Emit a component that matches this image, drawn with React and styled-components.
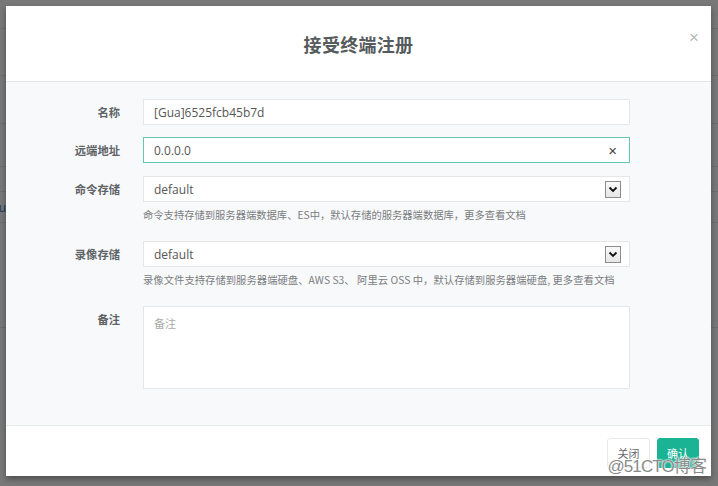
import React from 'react';
import styled, { createGlobalStyle } from 'styled-components';

const GlobalStyle = createGlobalStyle`
  html, body {
    margin: 0;
    padding: 0;
    width: 718px;
    height: 486px;
    overflow: hidden;
    font-family: "Open Sans", "Noto Sans CJK SC", sans-serif;
    color: #676a6c;
  }
`;

const Screen = styled.div`
  position: relative;
  width: 718px;
  height: 486px;
  overflow: hidden;
  background: #ffffff;
`;

const PageHeader = styled.div`
  height: 28px;
  border-bottom: 1px solid #e7eaec;
`;

const PageRow = styled.div`
  height: ${(p) => p.h}px;
  border-bottom: 1px solid #e7eaec;
  display: flex;
  align-items: center;
  font-size: 12px;
  color: #337ab7;
  text-indent: -10px;
`;

const Overlay = styled.div`
  position: absolute;
  inset: 0;
  background: rgba(0, 0, 0, 0.53);
`;

const Modal = styled.div`
  position: absolute;
  top: 6px;
  left: 6px;
  width: 705px;
  height: 470px;
  background: #ffffff;
  box-shadow: 0 3px 6px rgba(0, 0, 0, 0.35);
  display: flex;
  flex-direction: column;
`;

const Header = styled.div`
  position: relative;
  height: 75px;
  border-bottom: 1px solid #e5e5e5;
  display: flex;
  align-items: center;
  justify-content: center;
`;

const Title = styled.h4`
  margin: 0;
  padding-top: 1px;
  font-family: "Noto Sans CJK SC", sans-serif;
  font-size: 18px;
  font-weight: 700;
  color: #555a5c;
  letter-spacing: 0.3px;
`;

const Close = styled.button`
  position: absolute;
  right: 12px;
  top: 22px;
  border: none;
  background: none;
  padding: 0;
  font-family: "Liberation Sans", sans-serif;
  font-size: 17px;
  color: #b8b8b8;
  cursor: pointer;
`;

const Body = styled.div`
  flex: 1;
  background: #f8f9fb;
  border-bottom: 1px solid #e8ebec;
  padding: 17px 0 0 0;
`;

const Form = styled.div`
  display: grid;
  grid-template-columns: 114px 487px;
  column-gap: 23px;
  align-items: start;
`;

const Label = styled.label`
  text-align: right;
  font-family: "Noto Sans CJK SC", sans-serif;
  font-size: 11.3px;
  font-weight: 700;
  color: #5e6365;
  line-height: 26px;
  margin-bottom: ${(p) => p.mb}px;
`;

const Field = styled.div`
  margin-bottom: ${(p) => p.mb}px;
`;

const Box = styled.div`
  box-sizing: border-box;
  height: ${(p) => (p.tall ? 83 : 26)}px;
  background: #ffffff;
  border: 1px solid ${(p) => (p.focus ? '#62c9b0' : '#e5e6e7')};
  display: flex;
  align-items: ${(p) => (p.tall ? 'flex-start' : 'center')};
  padding: ${(p) => (p.tall ? '8px 10px' : '0 8px 0 10px')};
  font-size: 12px;
  color: ${(p) => (p.placeholder ? '#a9a9a9' : '#555')};
`;

const Value = styled.span`
  flex: 1;
  font-family: ${(p) => (p.cjk ? '"Noto Sans CJK SC", sans-serif' : '"Open Sans", "Noto Sans CJK SC", sans-serif')};
  font-size: ${(p) => (p.cjk ? 11 : 12)}px;
`;

const ClearX = styled.span`
  font-family: "Liberation Sans", sans-serif;
  font-size: 15px;
  color: #444;
  margin-right: 4px;
`;

const Arrow = styled.span`
  box-sizing: border-box;
  width: 16px;
  height: 17px;
  border: 1px solid #8c8c8c;
  background: linear-gradient(#fafafa, #e6e6e6);
  display: flex;
  align-items: center;
  justify-content: center;
`;

const Help = styled.div`
  margin-top: 6px;
  font-family: "Noto Sans CJK SC", sans-serif;
  font-size: 10.3px;
  line-height: 14px;
  color: #7a7d7f;
  white-space: nowrap;
  letter-spacing: ${(p) => p.ls || 0}px;
`;

const Footer = styled.div`
  height: 50px;
  display: flex;
  justify-content: flex-end;
  align-items: flex-start;
  gap: 7px;
  padding: 12px 12px 0 0;
  box-sizing: border-box;
`;

const Button = styled.button`
  height: 30px;
  width: ${(p) => p.w}px;
  padding: 0;
  border-radius: 3px;
  font-family: "Noto Sans CJK SC", sans-serif;
  font-size: 11px;
  border: 1px solid ${(p) => (p.primary ? '#1ab394' : '#e7eaec')};
  background: ${(p) => (p.primary ? '#1ab394' : '#ffffff')};
  color: ${(p) => (p.primary ? '#ffffff' : '#676a6c')};
`;

const Watermark = styled.div`
  position: absolute;
  right: 12px;
  bottom: 9px;
  font-family: "Liberation Sans", "Noto Sans CJK SC", sans-serif;
  font-size: 17px;
  color: #8a8a8a;
  text-shadow: 0 0 2px #fff, 0 0 2px #fff, 0 0 1px #fff;
  letter-spacing: -0.9px;
`;

function Chevron() {
  return (
    <svg width="10" height="7" viewBox="0 0 10 7">
      <path d="M1.5 1.5 L5 5 L8.5 1.5" fill="none" stroke="#111" strokeWidth="1.8" />
    </svg>
  );
}

function SelectBox({ value }) {
  return (
    <Box>
      <Value>{value}</Value>
      <Arrow>
        <Chevron />
      </Arrow>
    </Box>
  );
}

export default function App() {
  return (
    <Screen>
      <GlobalStyle />
      <PageHeader />
      <PageRow h={46} />
      <PageRow h={47} />
      <PageRow h={42} />
      <PageRow h={24} />
      <PageRow h={30}>Gua</PageRow>
      <PageRow h={104} />
      <Overlay />
      <Modal>
        <Header>
          <Title>接受终端注册</Title>
          <Close>×</Close>
        </Header>
        <Body>
          <Form>
            <Label mb={12}>名称</Label>
            <Field mb={12}>
              <Box>
                <Value>[Gua]6525fcb45b7d</Value>
              </Box>
            </Field>

            <Label mb={13}>远端地址</Label>
            <Field mb={13}>
              <Box focus>
                <Value>0.0.0.0</Value>
                <ClearX>×</ClearX>
              </Box>
            </Field>

            <Label mb={19}>命令存储</Label>
            <Field mb={19}>
              <SelectBox value="default" />
              <Help>命令支持存储到服务器端数据库、ES中，默认存储的服务器端数据库，更多查看文档</Help>
            </Field>

            <Label mb={19}>录像存储</Label>
            <Field mb={19}>
              <SelectBox value="default" />
              <Help ls={0.05}>录像文件支持存储到服务器端硬盘、AWS S3、 阿里云 OSS 中，默认存储到服务器端硬盘, 更多查看文档</Help>
            </Field>

            <Label mb={0}>备注</Label>
            <Field mb={0}>
              <Box tall placeholder>
                <Value cjk>备注</Value>
              </Box>
            </Field>
          </Form>
        </Body>
        <Footer>
          <Button w={43}>关闭</Button>
          <Button w={42} primary>确认</Button>
        </Footer>
      </Modal>
      <Watermark>@51CTO博客</Watermark>
    </Screen>
  );
}
